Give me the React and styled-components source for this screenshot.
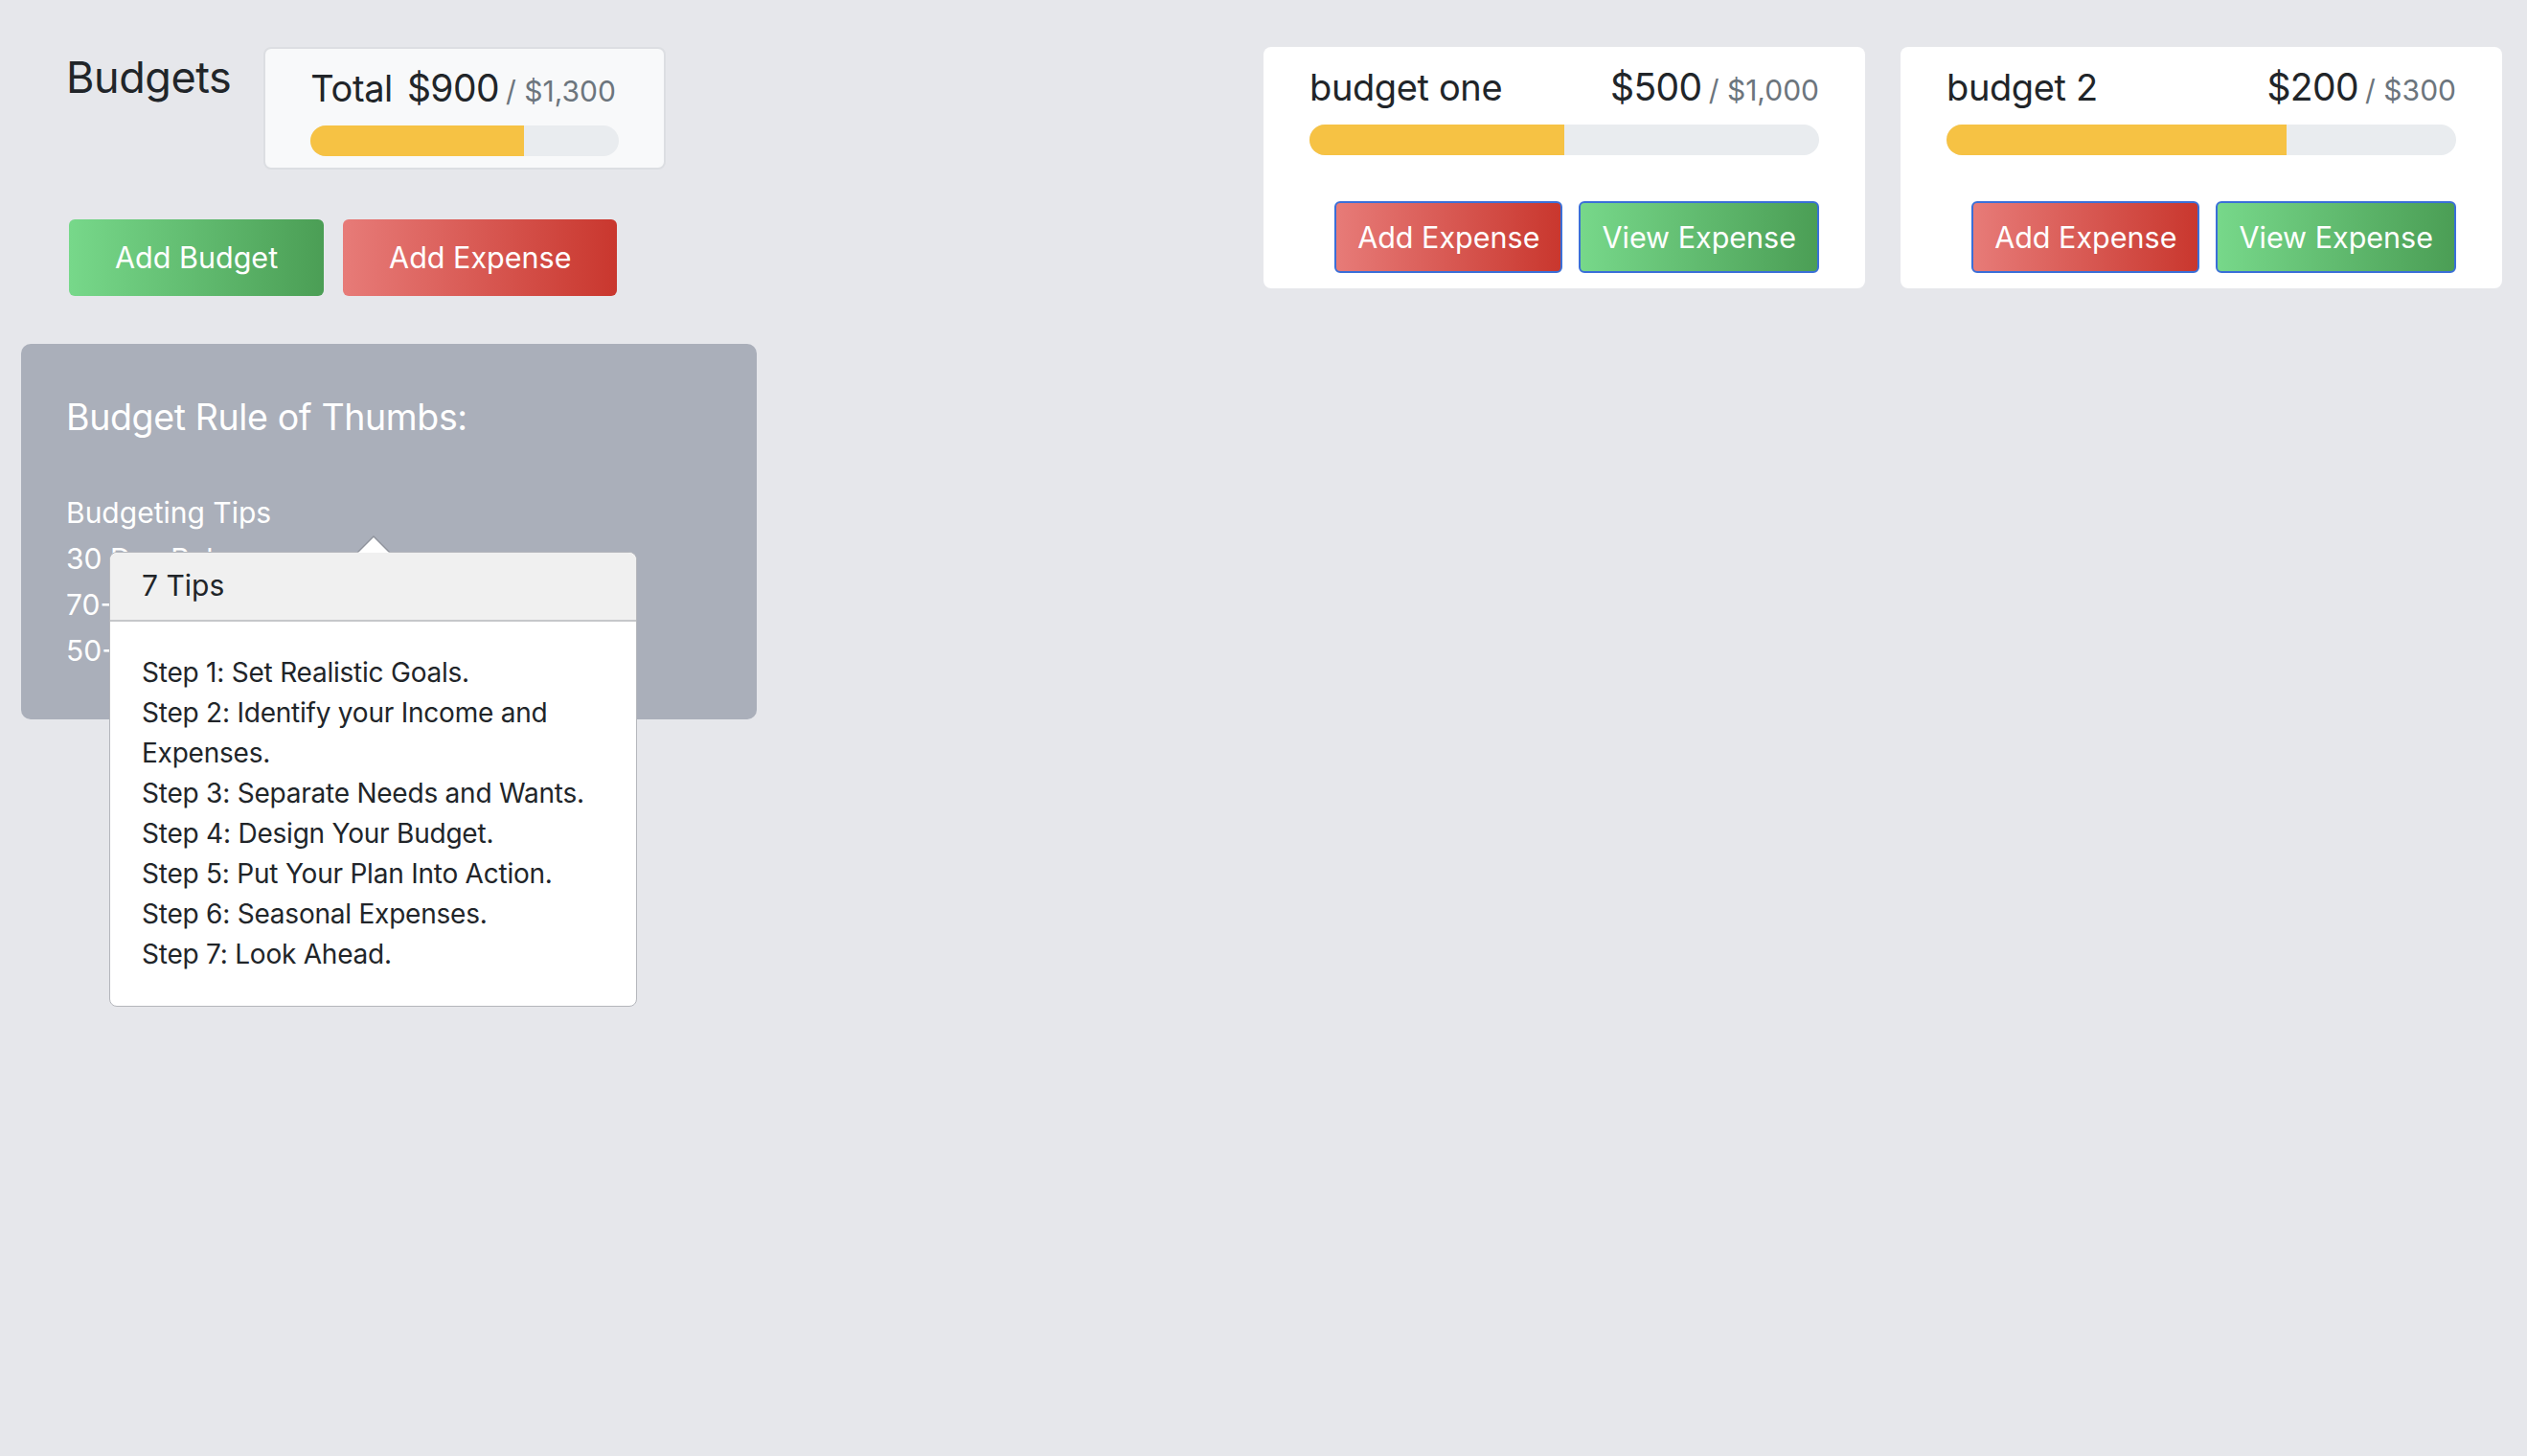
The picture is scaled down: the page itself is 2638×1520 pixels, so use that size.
import React from 'react';
import styled, { createGlobalStyle, css } from 'styled-components';

const GlobalStyle = createGlobalStyle`
    html, body {
        margin: 0;
        background: #e6e7eb;
        font-family: Inter, "Noto Sans", "Liberation Sans", sans-serif;
        color: #212529;
    }
`;

const budgets = [
    { id: 1, name: "budget one", spent: 500, limit: 1000 },
    { id: 2, name: "budget 2", spent: 200, limit: 300 },
];

// total also counts expenses that sit outside a budget
const totals = { spent: 900, limit: 1300 };

const tips = [
    "Step 1: Set Realistic Goals.",
    "Step 2: Identify your Income and Expenses.",
    "Step 3: Separate Needs and Wants.",
    "Step 4: Design Your Budget.",
    "Step 5: Put Your Plan Into Action.",
    "Step 6: Seasonal Expenses.",
    "Step 7: Look Ahead.",
];

const money = (n) => "$" + n.toLocaleString("en-US");

const Page = styled.div`
    min-height: 100vh;
    box-sizing: border-box;
    padding: 49px 26px 0 22px;
    display: flex;
    justify-content: space-between;
    align-items: flex-start;
`;

const LeftCol = styled.div`
    width: 768px;
    display: flex;
    flex-direction: column;
`;

const TopRow = styled.div`
    display: flex;
    align-items: flex-start;
    gap: 34px;
    padding-left: 47px;
`;

const Title = styled.h2`
    margin: 9px 0 0;
    font-size: 45px;
    font-weight: 400;
    line-height: 1;
    letter-spacing: -0.01em;
`;

const TotalCard = styled.div`
    width: 420px;
    box-sizing: border-box;
    background: #f8f9fa;
    border: 2px solid #dcdee2;
    border-radius: 8px;
    padding: 18px 47px 12px;
`;

const Card = styled.div`
    width: 628px;
    box-sizing: border-box;
    background: #ffffff;
    border-radius: 8px;
    padding: 19px 48px 16px;
`;

const AmountRow = styled.div`
    display: flex;
    align-items: baseline;
    justify-content: ${(p) => (p.$spread ? "space-between" : "flex-start")};
    gap: 15px;
    line-height: 1.2;
    white-space: nowrap;
`;

const Label = styled.span`
    font-size: 38px;
    letter-spacing: -0.01em;
`;

const Amount = styled.span`
    font-size: 39px;
    letter-spacing: -0.015em;
`;

const Limit = styled.small`
    font-size: 30px;
    color: #6c757d;
    margin-left: 7px;
`;

const Progress = styled.div`
    margin-top: 15px;
    height: 32px;
    border-radius: 16px;
    background: #e9ecef;
    overflow: hidden;
`;

const Fill = styled.div`
    height: 100%;
    background: #f6c244;
`;

const gradients = {
    green: "linear-gradient(90deg, #77d88a 0%, #4b9e55 100%)",
    red: "linear-gradient(90deg, #e77b78 0%, #c9372e 100%)",
};

const GradientButton = styled.button`
    font-family: inherit;
    font-size: 30.5px;
    line-height: 46px;
    color: #ffffff;
    border-radius: 6px;
    cursor: pointer;
    background: ${(p) => gradients[p.$tone]};
    ${(p) =>
        p.$outlined
            ? css`
                  border: 2px solid #3a6fd8;
                  padding: 13px 22px 12px;
              `
            : css`
                  border: none;
                  padding: 17px 48px;
              `}
`;

const ActionRow = styled.div`
    display: flex;
    gap: 20px;
    margin-top: 52px;
    padding-left: 50px;
`;

const CardActions = styled.div`
    display: flex;
    justify-content: flex-end;
    gap: 17px;
    margin-top: 48px;
`;

const CardRow = styled.div`
    display: flex;
    gap: 37px;
`;

const RulesPanel = styled.div`
    position: relative;
    margin-top: 50px;
    background: #aaafba;
    border-radius: 10px;
    padding: 54px 47px 48px;
    color: #ffffff;
`;

const RulesTitle = styled.h4`
    margin: 0 0 53px;
    font-size: 37.5px;
    font-weight: 400;
    line-height: 1.2;
    letter-spacing: -0.01em;
`;

const RuleLine = styled.div`
    font-size: 30px;
    line-height: 48px;
`;

const Popover = styled.div`
    position: absolute;
    left: 92px;
    top: 217px;
    width: 551px;
    box-sizing: border-box;
    background: #ffffff;
    border: 1px solid #b5b7bc;
    border-radius: 8px;
    color: #212529;

    &::before,
    &::after {
        content: "";
        position: absolute;
        left: 50%;
        transform: translateX(-50%);
        border-style: solid;
        border-color: transparent;
    }
    &::before {
        top: -18px;
        border-width: 0 17px 17px;
        border-bottom-color: #8f939c;
    }
    &::after {
        top: -16px;
        border-width: 0 16px 16px;
        border-bottom-color: #ffffff;
    }
`;

const PopoverHeader = styled.div`
    background: #f0f0f0;
    border-bottom: 2px solid #c6c7ca;
    border-radius: 8px 8px 0 0;
    padding: 12px 33px 13px;
    font-size: 30px;
    line-height: 45px;
`;

const PopoverBody = styled.div`
    padding: 32px 33px 33px;
    font-size: 28px;
    line-height: 42px;
    letter-spacing: -0.008em;
`;

function BudgetCard({ budget }) {
    const pct = (budget.spent / budget.limit) * 100;
    return (
        <Card>
            <AmountRow $spread>
                <Label>{budget.name}</Label>
                <span>
                    <Amount>{money(budget.spent)}</Amount>
                    <Limit>/ {money(budget.limit)}</Limit>
                </span>
            </AmountRow>
            <Progress>
                <Fill style={{ width: pct + "%" }} />
            </Progress>
            <CardActions>
                <GradientButton $tone="red" $outlined>Add Expense</GradientButton>
                <GradientButton $tone="green" $outlined>View Expense</GradientButton>
            </CardActions>
        </Card>
    );
}

export default function App() {
    return (
        <>
            <GlobalStyle />
            <Page>
                <LeftCol>
                    <TopRow>
                        <Title>Budgets</Title>
                        <TotalCard>
                            <AmountRow>
                                <Label>Total</Label>
                                <span>
                                    <Amount>{money(totals.spent)}</Amount>
                                    <Limit>/ {money(totals.limit)}</Limit>
                                </span>
                            </AmountRow>
                            <Progress>
                                <Fill style={{ width: (totals.spent / totals.limit) * 100 + "%" }} />
                            </Progress>
                        </TotalCard>
                    </TopRow>

                    <ActionRow>
                        <GradientButton $tone="green">Add Budget</GradientButton>
                        <GradientButton $tone="red">Add Expense</GradientButton>
                    </ActionRow>

                    <RulesPanel>
                        <RulesTitle>Budget Rule of Thumbs:</RulesTitle>
                        <RuleLine>Budgeting Tips</RuleLine>
                        <RuleLine>30 Day Rule</RuleLine>
                        <RuleLine>70-20-10 Rule</RuleLine>
                        <RuleLine>50-30-20 Rule</RuleLine>

                        {/* popover opened from "Budgeting Tips" */}
                        <Popover>
                            <PopoverHeader>7 Tips</PopoverHeader>
                            <PopoverBody>
                                {tips.map((t, i) => (
                                    <div key={i}>{t}</div>
                                ))}
                            </PopoverBody>
                        </Popover>
                    </RulesPanel>
                </LeftCol>

                <CardRow>
                    {budgets.map((b) => (
                        <BudgetCard key={b.id} budget={b} />
                    ))}
                </CardRow>
            </Page>
        </>
    );
}
